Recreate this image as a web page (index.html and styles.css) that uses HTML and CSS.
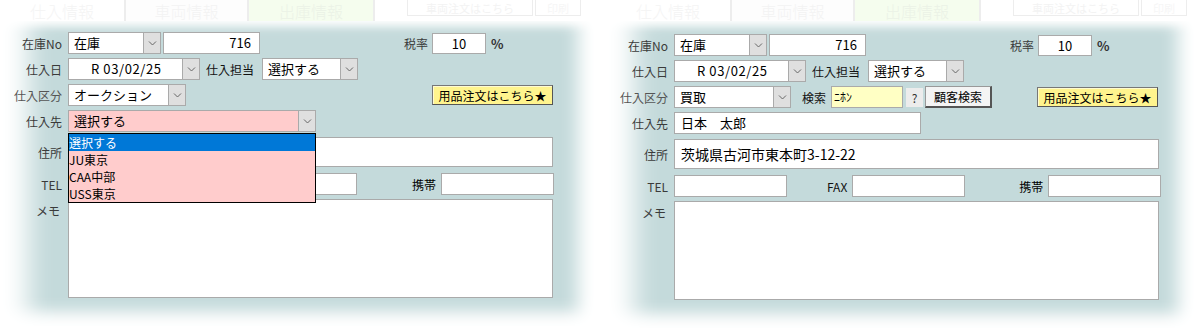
FILE: index.html
```html
<!DOCTYPE html>
<html lang="ja">
<head>
    <meta charset="UTF-8">
    <title>仕入情報</title>
    <link rel="stylesheet" href="styles.css">
</head>
<body>
    <div class="page">
        <!-- left: supplier dropdown open -->
        <div class="panel">
            <div class="tabs">
                <div class="tab t1">仕入情報</div>
                <div class="tab t2">車両情報</div>
                <div class="tab t3">出庫情報</div>
                <div class="tab-btn b1">車両注文はこちら</div>
                <div class="tab-btn b2">印刷</div>
            </div>
            <div class="sheet">
                <div class="row">
                    <span class="lbl">在庫No</span>
                    <div class="sel w-stock"><span class="val">在庫</span><span class="arrow"><svg width="9" height="5" viewBox="0 0 9 5"><path d="M1 .5l3.5 3.5L8 .5" fill="none" stroke="#666"/></svg></span></div>
                    <div class="inp w-no num">716</div>
                    <span class="lbl-inline tax">税率</span>
                    <div class="inp w-tax center">10</div>
                    <span class="pct">%</span>
                </div>
                <div class="row">
                    <span class="lbl">仕入日</span>
                    <div class="sel w-date"><span class="val date">R 03/02/25</span><span class="arrow"><svg width="9" height="5" viewBox="0 0 9 5"><path d="M1 .5l3.5 3.5L8 .5" fill="none" stroke="#666"/></svg></span></div>
                    <span class="lbl-inline staff">仕入担当</span>
                    <div class="sel w-staff"><span class="val">選択する</span><span class="arrow"><svg width="9" height="5" viewBox="0 0 9 5"><path d="M1 .5l3.5 3.5L8 .5" fill="none" stroke="#666"/></svg></span></div>
                </div>
                <div class="row">
                    <span class="lbl fade">仕入区分</span>
                    <div class="sel w-kind"><span class="val">オークション</span><span class="arrow"><svg width="9" height="5" viewBox="0 0 9 5"><path d="M1 .5l3.5 3.5L8 .5" fill="none" stroke="#666"/></svg></span></div>
                    <button class="btn-order">用品注文はこちら★</button>
                </div>
                <div class="row has-list">
                    <span class="lbl">仕入先</span>
                    <div class="sel w-supplier pink"><span class="val">選択する</span><span class="arrow"><svg width="9" height="5" viewBox="0 0 9 5"><path d="M1 .5l3.5 3.5L8 .5" fill="none" stroke="#666"/></svg></span></div>
                    <ul class="dd-list">
                        <li class="active">選択する</li>
                        <li>JU東京</li>
                        <li>CAA中部</li>
                        <li>USS東京</li>
                    </ul>
                </div>
                <div class="row tall">
                    <span class="lbl">住所</span>
                    <div class="inp w-full"></div>
                </div>
                <div class="row tel">
                    <span class="lbl">TEL</span>
                    <div class="inp w-tel-long"></div>
                    <span class="lbl-inline dark mobile-l">携帯</span>
                    <div class="inp w-phone"></div>
                </div>
                <div class="row memo">
                    <span class="lbl">メモ</span>
                    <div class="inp w-full memo-box"></div>
                </div>
            </div>
        </div>

        <!-- right: customer selected -->
        <div class="panel right">
            <div class="tabs">
                <div class="tab t1">仕入情報</div>
                <div class="tab t2">車両情報</div>
                <div class="tab t3">出庫情報</div>
                <div class="tab-btn b1">車両注文はこちら</div>
                <div class="tab-btn b2">印刷</div>
            </div>
            <div class="sheet">
                <div class="row">
                    <span class="lbl">在庫No</span>
                    <div class="sel w-stock"><span class="val">在庫</span><span class="arrow"><svg width="9" height="5" viewBox="0 0 9 5"><path d="M1 .5l3.5 3.5L8 .5" fill="none" stroke="#666"/></svg></span></div>
                    <div class="inp w-no num">716</div>
                    <span class="lbl-inline tax">税率</span>
                    <div class="inp w-tax center">10</div>
                    <span class="pct">%</span>
                </div>
                <div class="row">
                    <span class="lbl">仕入日</span>
                    <div class="sel w-date"><span class="val date">R 03/02/25</span><span class="arrow"><svg width="9" height="5" viewBox="0 0 9 5"><path d="M1 .5l3.5 3.5L8 .5" fill="none" stroke="#666"/></svg></span></div>
                    <span class="lbl-inline staff">仕入担当</span>
                    <div class="sel w-staff"><span class="val">選択する</span><span class="arrow"><svg width="9" height="5" viewBox="0 0 9 5"><path d="M1 .5l3.5 3.5L8 .5" fill="none" stroke="#666"/></svg></span></div>
                </div>
                <div class="row">
                    <span class="lbl fade">仕入区分</span>
                    <div class="sel w-kind2"><span class="val">買取</span><span class="arrow"><svg width="9" height="5" viewBox="0 0 9 5"><path d="M1 .5l3.5 3.5L8 .5" fill="none" stroke="#666"/></svg></span></div>
                    <span class="lbl-inline search">検索</span>
                    <div class="inp w-kana yellow">ﾆﾎﾝ</div>
                    <span class="help">?</span>
                    <button class="btn-cust">顧客検索</button>
                    <button class="btn-order">用品注文はこちら★</button>
                </div>
                <div class="row">
                    <span class="lbl">仕入先</span>
                    <div class="inp w-name">日本　太郎</div>
                </div>
                <div class="row tall">
                    <span class="lbl">住所</span>
                    <div class="inp w-full addr">茨城県古河市東本町3-12-22</div>
                </div>
                <div class="row tel">
                    <span class="lbl">TEL</span>
                    <div class="inp w-phone"></div>
                    <span class="lbl-inline fax">FAX</span>
                    <div class="inp w-phone"></div>
                    <span class="lbl-inline dark mobile-r">携帯</span>
                    <div class="inp w-phone2"></div>
                </div>
                <div class="row memo">
                    <span class="lbl">メモ</span>
                    <div class="inp w-full memo-box"></div>
                </div>
            </div>
        </div>
    </div>
</body>
</html>
```

FILE: styles.css
```css
body {
    margin: 0;
    background-color: #fff;
    font-family: "Noto Sans CJK JP", "Noto Sans", sans-serif;
    font-size: 12px;
    color: #000;
}
.page {
    display: flex;
    gap: 12px;
    width: 1194px;
    height: 330px;
    overflow: hidden;
}
.panel {
    width: 594px;
    flex: none;
}
.panel.right {
    width: 588px;
}

/* faded tab strip */
.tabs {
    display: flex;
    height: 21px;
    align-items: stretch;
    background-color: #fff;
}
.tab {
    display: flex;
    align-items: center;
    justify-content: center;
    font-size: 16px;
    font-weight: 300;
    color: #f3f3f3;
    border-right: 2px solid #ededed;
}
.tab.t1 { width: 124px; color: #f4f4f4; }
.tab.t2 { width: 121px; background-color: #fdfdfd; }
.tab.t3 { width: 124px; background-color: #f5fdee; color: #ebf2e6; }
.tab-btn {
    display: flex;
    align-items: center;
    justify-content: center;
    font-size: 11px;
    color: #f3f3f3;
    border: 1px solid #ededed;
    border-top: none;
    height: 15px;
}
.tab-btn.b1 { width: 124px; margin-left: 32px; }
.tab-btn.b2 { width: 44px; margin-left: 2px; color: #f6f6f6; }

/* teal sheet with white faded edges */
.sheet {
    background-color: #c4dadb;
    padding: 11px 0 28px 0;
    display: flex;
    flex-direction: column;
    gap: 4px;
    box-shadow: inset 36px 0 26px -8px #fff,
                inset -22px 0 18px -6px #fff,
                inset 0 -20px 16px -6px #fff,
                inset 0 8px 10px -4px #fff;
}
.panel.right .sheet {
    padding-top: 13px;
}
.row {
    display: flex;
    align-items: center;
    height: 22px;
}
.row.has-list {
    position: relative;
}
.row.tall {
    height: 30px;
    margin-top: 1px;
}
.row.tel {
    margin-top: 2px;
}
.row.memo {
    height: 99px;
    align-items: flex-start;
}
.lbl {
    width: 62px;
    margin-right: 6px;
    text-align: right;
    color: #3a3a3a;
    flex: none;
}
.lbl.fade {
    color: #555;
}
.row.memo .lbl {
    padding-top: 3px;
    padding-right: 2px;
    box-sizing: border-box;
}
.lbl-inline {
    color: #3a3a3a;
    flex: none;
}
.lbl-inline.dark {
    color: #000;
}
.lbl-inline.tax { margin-left: 144px; margin-right: 4px; }
.lbl-inline.staff { margin-left: 6px; margin-right: 8px; color: #111; }
.lbl-inline.search { margin-left: 11px; margin-right: 5px; color: #111; }
.lbl-inline.fax { margin-left: 40px; margin-right: 5px; color: #111; }
.lbl-inline.mobile-l { margin-left: 55px; margin-right: 5px; }
.lbl-inline.mobile-r { margin-left: 54px; margin-right: 5px; }

/* inputs */
.inp {
    box-sizing: border-box;
    height: 22px;
    background-color: #fff;
    border: 1px solid #aaa;
    font-size: 13px;
    line-height: 20px;
    padding: 0 6px;
    flex: none;
    white-space: nowrap;
}
.inp.num { text-align: right; padding-right: 8px; margin-left: 2px; }
.inp.center { text-align: center; height: 21px; line-height: 19px; }
.inp.yellow { background-color: #ffffc4; padding: 0 2px; font-size: 12px; }
.w-no { width: 97px; }
.w-tax { width: 54px; }
.w-kana { width: 72px; }
.w-name { width: 247px; }
.w-full { width: 485px; }
.w-tel-long { width: 289px; }
.w-phone { width: 113px; }
.w-phone2 { width: 113px; }
.row.tall .inp { height: 30px; line-height: 28px; }
.inp.addr { font-size: 14px; }
.memo-box { height: 99px; }
.pct {
    margin-left: 5px;
    font-weight: bold;
    font-size: 13px;
    color: #333;
}

/* select boxes */
.sel {
    box-sizing: border-box;
    display: flex;
    height: 22px;
    background-color: #fff;
    border: 1px solid #aaa;
    flex: none;
}
.sel .val {
    flex: 1;
    font-size: 13px;
    line-height: 20px;
    padding-left: 5px;
    white-space: nowrap;
}
.sel .val.date {
    padding-left: 22px;
    letter-spacing: 0.6px;
}
.sel .arrow {
    width: 16px;
    display: flex;
    align-items: center;
    justify-content: center;
    background-color: #dfdfdf;
    border-left: 1px solid #aaa;
}
.sel.pink { background-color: #ffcccc; }
.w-stock { width: 93px; }
.w-date { width: 132px; }
.w-staff { width: 96px; }
.w-kind { width: 118px; }
.w-kind2 { width: 117px; }
.w-supplier { width: 248px; }

/* open dropdown list */
.dd-list {
    position: absolute;
    left: 68px;
    top: 23px;
    width: 248px;
    box-sizing: border-box;
    margin: 0;
    padding: 0;
    list-style: none;
    background-color: #ffcccc;
    border: 1px solid #000;
    z-index: 10;
}
.dd-list li {
    height: 17px;
    line-height: 17px;
    font-size: 12px;
    padding-left: 0;
}
.dd-list li.active {
    background-color: #0078d7;
    color: #fff;
}

/* buttons */
button {
    font-family: inherit;
    cursor: pointer;
}
.btn-order {
    margin-left: auto;
    margin-right: 41px;
    width: 121px;
    height: 20px;
    padding: 0;
    font-size: 12px;
    color: #000;
    background-color: #fff48e;
    border: 1px solid #777;
    border-right-color: #555;
    border-bottom-color: #555;
    box-shadow: inset 1px 1px 0 #fffbd0;
}
.panel.right .btn-order {
    margin-right: 36px;
}
.help {
    width: 17px;
    height: 19px;
    margin-left: 3px;
    background-color: #ececec;
    text-align: center;
    line-height: 19px;
    font-size: 12px;
    color: #333;
    flex: none;
}
.btn-cust {
    margin-left: 2px;
    width: 67px;
    height: 22px;
    padding: 0;
    font-size: 12px;
    color: #000;
    background-color: #f4f4f4;
    border: 1px solid #999;
    border-right: 2px solid #555;
    border-bottom: 2px solid #555;
    flex: none;
}
```
